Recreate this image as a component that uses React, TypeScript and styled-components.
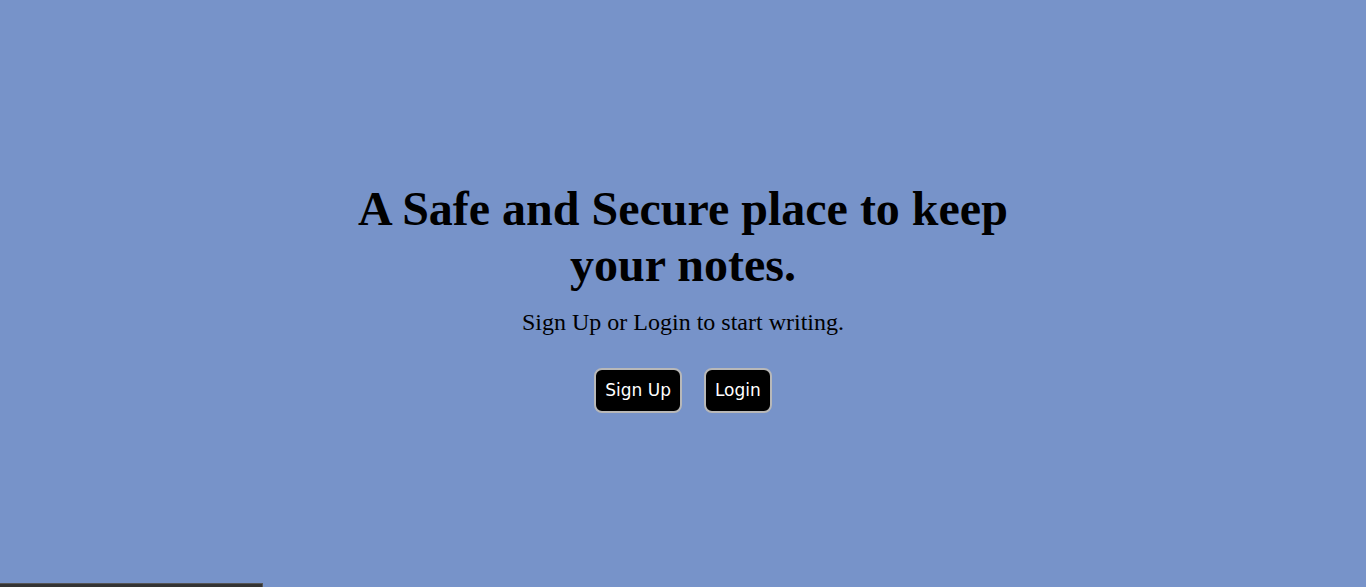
import React from "react";
import styled, { createGlobalStyle } from "styled-components";

const Global = createGlobalStyle`
  html, body { margin: 0; padding: 0; }
  body { background: #7793c9; font-family: "Liberation Serif", "Times New Roman", serif; }
`;

const Page = styled.div`
  min-height: 100vh;
  display: flex;
  flex-direction: column;
  box-sizing: border-box;
`;

const Hero = styled.main`
  flex: 1;
  display: flex;
  flex-direction: column;
  align-items: center;
  justify-content: center;
  padding-top: 10px;
  text-align: center;
`;

const Title = styled.h1`
  margin: 0;
  max-width: 680px;
  font-size: 48px;
  font-weight: 700;
  line-height: 56px;
  color: #000;
`;

const Subtitle = styled.p`
  margin: 16px 0 0;
  font-size: 24px;
  color: #000;
`;

const Actions = styled.div`
  margin-top: 32px;
  display: flex;
  gap: 22px;
`;

const Button = styled.button`
  box-sizing: border-box;
  height: 45px;
  padding: 0 9px;
  background: #000;
  color: #fff;
  border: 2px solid #b8b8b8;
  border-radius: 8px;
  font-family: "DejaVu Sans", Verdana, sans-serif;
  font-size: 17px;
  cursor: pointer;
`;

const Bar = styled.div`
  width: 263px;
  height: 4px;
  background: #333;
  border-top: 1px solid #555;
  border-right: 1px solid #555;
  box-sizing: border-box;
`;

export default function App() {
  return (
    <>
      <Global />
      <Page>
        <Hero>
          <Title>A Safe and Secure place to keep your notes.</Title>
          <Subtitle>Sign Up or Login to start writing.</Subtitle>
          <Actions>
            <Button>Sign Up</Button>
            <Button>Login</Button>
          </Actions>
        </Hero>
        <Bar />
      </Page>
    </>
  );
}
